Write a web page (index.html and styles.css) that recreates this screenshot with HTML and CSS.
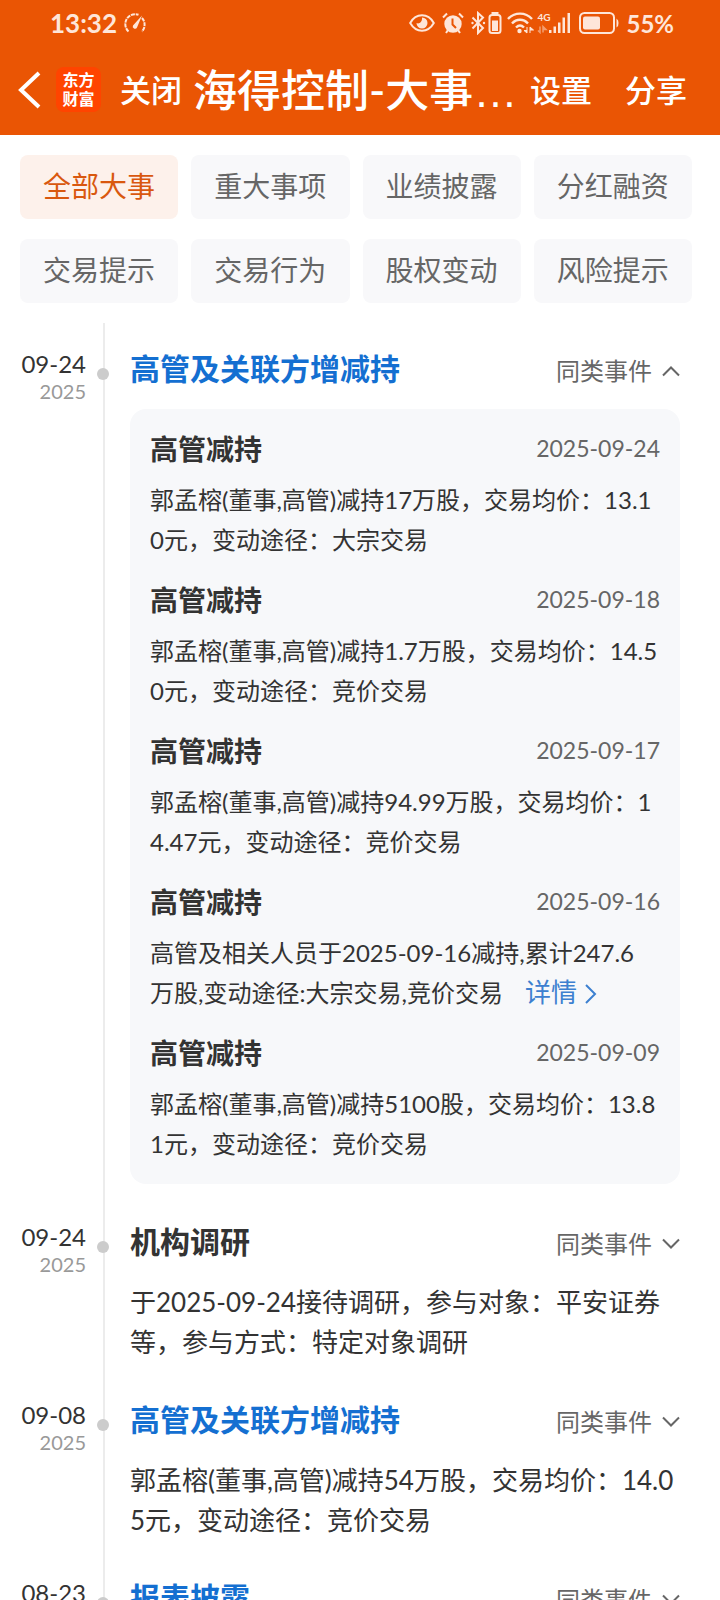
FILE: index.html
```
<!DOCTYPE html>
<html lang="zh-CN">

<head>
  <meta charset="UTF-8">
  <meta name="viewport" content="width=device-width, initial-scale=1.0">
  <title>海得控制-大事提醒</title>
  <link rel="stylesheet" href="styles.css">
</head>

<body>
  <header>
    <div class="status">
      <span class="time">13:32</span>
      <svg class="gauge" width="24" height="22" viewBox="0 0 24 22">
        <path d="M5.500 19.500A10 10 0 0 1 15.500 2.700M19 6a10 10 0 0 1 0 13.500" fill="none" stroke="currentColor" stroke-width="2" stroke-dasharray="4 .8" />
        <path d="M10 13.500L19 3.500 14 15.500a2.200 2.200 0 1 1-4-2z" fill="currentColor" />
      </svg>
      <div class="status-icons">
        <svg width="26" height="20" viewBox="0 0 26 20">
          <path d="M1.200 10C7-.2 19-.2 24.800 10 19 20.200 7 20.200 1.200 10z" fill="none" stroke="currentColor" stroke-width="2" />
          <path d="M13 4.500a5.500 5.500 0 1 1-5.500 5.500c2.500 1.500 6-1 5.500-5.500z" fill="currentColor" />
        </svg>
        <svg width="22" height="22" viewBox="0 0 22 22">
          <circle cx="11" cy="12" r="8.700" fill="currentColor" />
          <path d="M1 5.500L5 1.500M21 5.500l-4-4M4 21l2-3M18 21l-2-3" stroke="currentColor" stroke-width="2" />
          <path class="cut" d="M10.500 6.500v6l3.500 3.500" fill="none" stroke-width="2" />
        </svg>
        <svg class="bluetooth" width="31" height="24" viewBox="0 0 31 24">
          <path d="M1.500 6.500L12 17l-5 5V2l5 4.500L1.500 17.500" fill="none" stroke="currentColor" stroke-width="2" />
          <circle cx="1.500" cy="12" r="1.200" fill="currentColor" />
          <circle cx="13" cy="12" r="1.200" fill="currentColor" />
          <rect x="18.500" y="4" width="11" height="18" rx="2.500" fill="none" stroke="currentColor" stroke-width="2" />
          <path d="M20.500 1h7v2h-7zM21 9.500h6v10.500h-6z" fill="currentColor" />
        </svg>
        <svg width="27" height="22" viewBox="0 0 27 22">
          <path d="M1 7C7.500-.2 18.500-.2 25 7M5 11.500c4.500-5 11.500-5 16 0M9 15.500c2.500-2.500 5.500-2.500 8 0" fill="none" stroke="currentColor" stroke-width="2.400" />
          <circle cx="12.500" cy="19" r="2.200" fill="currentColor" />
          <path d="M20 15v6l-3-2.500h3M23 21v-6l3.500 3H23" fill="currentColor" stroke="currentColor" stroke-width="1" />
        </svg>
        <div class="signal">
          <span class="network">4G</span>
          <svg width="34" height="22" viewBox="0 0 34 22">
            <path d="M3 14.500v6l-2-2M6 20.500v-6l3 3H6" fill="none" stroke="currentColor" stroke-width="1.500" opacity=".5" />
            <path d="M12 18h2.500v3H12zM16.500 14.500H19V21h-2.500zM21 10.500h2.500V21H21zM25.500 5.500H28V21h-2.500zM30.500 1H33v20h-2.500z" fill="currentColor" />
          </svg>
        </div>
        <svg width="42" height="24" viewBox="0 0 42 24">
          <rect x="2" y="2" width="34" height="20" rx="4.500" fill="none" stroke="currentColor" stroke-width="2" />
          <rect x="5" y="5.500" width="17" height="13" rx="2" fill="currentColor" />
          <path d="M38.500 7.500v9a5 5 0 0 0 2-4.500 5 5 0 0 0-2-4.500z" fill="currentColor" />
        </svg>
      </div>
      <span class="percent">55%</span>
    </div>
    <nav>
      <button class="back" aria-label="返回">
        <svg width="24" height="38" viewBox="0 0 24 38">
          <path d="M21 2L3 19l18 17" fill="none" stroke="currentColor" stroke-width="4" />
        </svg>
      </button>
      <a class="logo" href="#">东方<br>财富</a>
      <button class="close">关闭</button>
      <h1>海得控制-大事<span class="dots">…</span></h1>
      <button class="setting">设置</button>
      <button class="share">分享</button>
    </nav>
  </header>

  <main>
    <div class="tabs">
      <button class="active">全部大事</button>
      <button>重大事项</button>
      <button>业绩披露</button>
      <button>分红融资</button>
      <button>交易提示</button>
      <button>交易行为</button>
      <button>股权变动</button>
      <button>风险提示</button>
    </div>

    <div class="timeline">
      <section class="event">
        <div class="date">09-24<small>2025</small></div>
        <div class="rail"><i class="dot"></i></div>
        <div class="content">
          <div class="title">
            <h2><a href="#">高管及关联方增减持</a></h2>
            <button class="same">同类事件
              <svg width="18" height="12" viewBox="0 0 18 12"><path d="M1 10.500l8-8 8 8" /></svg>
            </button>
          </div>
          <div class="card">
            <article>
              <div class="card-title"><h3>高管减持</h3><time>2025-09-24</time></div>
              <p>郭孟榕(董事,高管)减持17万股，交易均价：13.1<br>0元，变动途径：大宗交易</p>
            </article>
            <article>
              <div class="card-title"><h3>高管减持</h3><time>2025-09-18</time></div>
              <p>郭孟榕(董事,高管)减持1.7万股，交易均价：14.5<br>0元，变动途径：竞价交易</p>
            </article>
            <article>
              <div class="card-title"><h3>高管减持</h3><time>2025-09-17</time></div>
              <p>郭孟榕(董事,高管)减持94.99万股，交易均价：1<br>4.47元，变动途径：竞价交易</p>
            </article>
            <article>
              <div class="card-title"><h3>高管减持</h3><time>2025-09-16</time></div>
              <p>高管及相关人员于2025-09-16减持,累计247.6<br>万股,变动途径:大宗交易,竞价交易<a class="more" href="#">详情<svg width="13" height="20" viewBox="0 0 13 20"><path d="M2 1l9 9-9 9" /></svg></a></p>
            </article>
            <article>
              <div class="card-title"><h3>高管减持</h3><time>2025-09-09</time></div>
              <p>郭孟榕(董事,高管)减持5100股，交易均价：13.8<br>1元，变动途径：竞价交易</p>
            </article>
          </div>
        </div>
      </section>

      <section class="event">
        <div class="date">09-24<small>2025</small></div>
        <div class="rail"><i class="dot"></i></div>
        <div class="content">
          <div class="title">
            <h2>机构调研</h2>
            <button class="same">同类事件
              <svg width="18" height="12" viewBox="0 0 18 12"><path d="M1 1.500l8 8 8-8" /></svg>
            </button>
          </div>
          <p>于2025-09-24接待调研，参与对象：平安证券<br>等，参与方式：特定对象调研</p>
        </div>
      </section>

      <section class="event">
        <div class="date">09-08<small>2025</small></div>
        <div class="rail"><i class="dot"></i></div>
        <div class="content">
          <div class="title">
            <h2><a href="#">高管及关联方增减持</a></h2>
            <button class="same">同类事件
              <svg width="18" height="12" viewBox="0 0 18 12"><path d="M1 1.500l8 8 8-8" /></svg>
            </button>
          </div>
          <p>郭孟榕(董事,高管)减持54万股，交易均价：14.0<br>5元，变动途径：竞价交易</p>
        </div>
      </section>

      <section class="event">
        <div class="date">08-23<small>2025</small></div>
        <div class="rail"><i class="dot"></i></div>
        <div class="content">
          <div class="title">
            <h2><a href="#">报表披露</a></h2>
            <button class="same">同类事件
              <svg width="18" height="12" viewBox="0 0 18 12"><path d="M1 1.500l8 8 8-8" /></svg>
            </button>
          </div>
        </div>
      </section>
    </div>
  </main>
</body>

</html>
```
FILE: styles.css
```
* {
  box-sizing: border-box;
  margin: 0;
  padding: 0;
}

body {
  height: 100vh;
  display: flex;
  flex-direction: column;
  background: #fff;
  color: #333;
  font-family: Lato, "Noto Sans CJK SC", sans-serif;
}

button {
  border: none;
  background: none;
  color: inherit;
  font-family: inherit;
}

a {
  color: inherit;
  text-decoration: none;
}

svg {
  display: block;
  flex-shrink: 0;
}

/* header */
header {
  flex-shrink: 0;
  background: #ea5504;
  color: #fff;
}

.status {
  height: 46px;
  padding: 0 46px 0 50px;
  display: flex;
  align-items: center;
  color: #fee6d9;
  font-weight: bold;
  white-space: nowrap;
}

.time {
  font-size: 26px;
}

.gauge {
  margin-left: 6px;
}

.status-icons {
  margin-left: auto;
  display: flex;
  align-items: center;
  gap: 7px;
}

.cut {
  stroke: #ea5504;
}

.bluetooth {
  margin-right: -2px;
}

.signal {
  position: relative;
  margin-left: -4px;
}

.network {
  position: absolute;
  left: 0;
  top: 0;
  font-size: 10px;
  line-height: 10px;
}

.percent {
  margin-left: 6px;
  font-size: 24px;
}

nav {
  height: 89px;
  padding: 0 33px 2px 18px;
  display: flex;
  align-items: center;
  white-space: nowrap;
}

.logo {
  width: 45px;
  height: 45px;
  margin-left: 14px;
  padding-top: 3px;
  border-radius: 8px;
  background: #ff4400;
  font-family: "Noto Sans CJK SC", sans-serif;
  font-size: 16px;
  font-weight: bold;
  line-height: 19px;
  text-align: center;
}

.close,
.setting,
.share {
  padding-bottom: 3px;
  font-size: 31px;
  font-weight: 500;
}

.close {
  margin-left: 19px;
}

h1 {
  flex: 1;
  min-width: 0;
  margin-left: 11px;
  padding-bottom: 3px;
  font-size: 44px;
  font-weight: 500;
}

.dots {
  font-family: "Liberation Sans", sans-serif;
}

.share {
  margin-left: 33px;
}

/* tabs */
main {
  flex: 1;
  min-height: 0;
  display: flex;
  flex-direction: column;
  overflow-y: auto;
  scrollbar-width: none;
}

.tabs {
  padding: 20px 28px 20px 20px;
  display: grid;
  grid-template-columns: repeat(4, 1fr);
  gap: 20px 13px;
}

.tabs button {
  height: 64px;
  padding-bottom: 5px;
  border-radius: 8px;
  background: #f8f8fa;
  color: #666;
  font-size: 28px;
}

.tabs .active {
  background: #fdf1eb;
  color: #d9580f;
}

/* timeline */
.event {
  padding: 0 40px 0 20px;
  display: grid;
  grid-template-columns: 66px 44px 1fr;
}

.date {
  padding-top: 27px;
  font-size: 24px;
  line-height: 28px;
  text-align: right;
}

.date small {
  display: block;
  color: #999;
  font-size: 20px;
  line-height: 26px;
}

.rail {
  position: relative;
  width: 2px;
  margin-left: 17px;
  background: #ececec;
}

.dot {
  position: absolute;
  left: -6px;
  top: 45px;
  width: 12px;
  height: 12px;
  border-radius: 50%;
  background: #ccc;
}

.content {
  padding: 26px 0 12px;
}

.title,
.card-title {
  height: 40px;
  display: flex;
  justify-content: space-between;
}

.title {
  margin-bottom: 20px;
}

h2 {
  font-size: 30px;
  line-height: 38px;
}

h2 a {
  color: #146fd1;
}

.same {
  display: flex;
  align-items: center;
  gap: 10px;
  height: 44px;
  color: #666;
  font-size: 24px;
  line-height: 44px;
}

.same path,
.more path {
  fill: none;
  stroke: currentColor;
  stroke-width: 2;
}

.content p {
  font-size: 26px;
  line-height: 40px;
  white-space: nowrap;
}

.card {
  padding: 20px;
  border-radius: 16px;
  background: #f7f8fa;
}

.card article + article {
  margin-top: 20px;
}

.card-title {
  margin-bottom: 11px;
}

h3 {
  font-size: 28px;
  line-height: 40px;
}

time {
  color: #666;
  font-size: 23px;
  line-height: 38px;
}

.content .card p {
  font-size: 24px;
}

.more {
  margin-left: 22px;
  color: #3d80d0;
  font-size: 26px;
  line-height: 30px;
}

.more svg {
  display: inline-block;
  margin-left: 7px;
  vertical-align: -2px;
}
```
